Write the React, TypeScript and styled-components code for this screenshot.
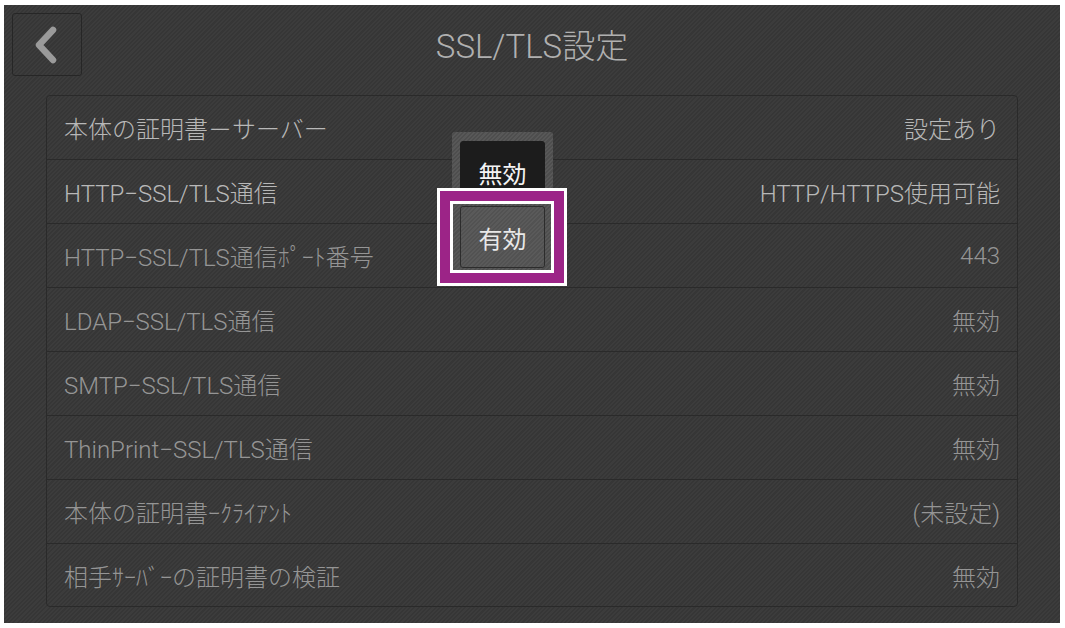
import React from "react";
import styled, { createGlobalStyle } from "styled-components";

const GlobalStyle = createGlobalStyle`
  html, body {
    margin: 0;
    padding: 0;
    background: #fff;
  }
  body {
    font-family: Roboto, "Noto Sans CJK JP", sans-serif;
  }
`;

const stripes = (a: string, b: string) =>
  `repeating-linear-gradient(135deg, ${a} 0px, ${a} 1.5px, ${b} 1.5px, ${b} 3px)`;

type Setting = { label: string; value: string; dim?: boolean };

const settings: Setting[] = [
  { label: "本体の証明書－サーバー", value: "設定あり" },
  { label: "HTTP−SSL/TLS通信", value: "HTTP/HTTPS使用可能" },
  { label: "HTTP−SSL/TLS通信ﾎﾟｰﾄ番号", value: "443", dim: true },
  { label: "LDAP−SSL/TLS通信", value: "無効", dim: true },
  { label: "SMTP−SSL/TLS通信", value: "無効", dim: true },
  { label: "ThinPrint−SSL/TLS通信", value: "無効", dim: true },
  { label: "本体の証明書ｰｸﾗｲｱﾝﾄ", value: "(未設定)", dim: true },
  { label: "相手ｻｰﾊﾞｰの証明書の検証", value: "無効", dim: true },
];

const App = (): JSX.Element => {
  return (
    <Page>
      <GlobalStyle />
      <Screen>
        <Header>
          <BackButton aria-label="戻る">
            <svg width="26" height="40" viewBox="0 0 26 40">
              <path
                d="M20 5 L6 20 L20 35"
                fill="none"
                stroke="#9a9a9a"
                strokeWidth="6.5"
                strokeLinecap="round"
                strokeLinejoin="round"
              />
            </svg>
          </BackButton>
          <Title>SSL/TLS設定</Title>
          <span />
        </Header>
        <List>
          {settings.map((s) => (
            <Row key={s.label} $dim={s.dim}>
              <span>{s.label}</span>
              <span>{s.value}</span>
            </Row>
          ))}
        </List>
        <Popup>
          <Option>無効</Option>
          <Option $selected>有効</Option>
        </Popup>
      </Screen>
    </Page>
  );
};

export default App;

const Page = styled.div`
  padding: 5px 5px 5px 4px;
  width: 1065px;
  height: 628px;
  box-sizing: border-box;
`;

const Screen = styled.div`
  position: relative;
  width: 1056px;
  height: 618px;
  background: ${stripes("#3c3c3c", "#363636")};
  overflow: hidden;
`;

const Header = styled.header`
  display: grid;
  grid-template-columns: 70px 1fr 70px;
  align-items: center;
  padding: 8px 8px 19px;
`;

const BackButton = styled.button`
  width: 70px;
  height: 63px;
  box-sizing: border-box;
  border: 1px solid #262626;
  border-radius: 3px;
  background: transparent;
  display: flex;
  align-items: center;
  justify-content: center;
  padding: 0 2px 0 0;
`;

const Title = styled.h1`
  margin: 0 0 2px;
  text-align: center;
  font-size: 33px;
  font-weight: 300;
  color: #b0b0b0;
`;

const List = styled.div`
  margin: 0 42px;
  border: 1px solid #2a2a2a;
  border-radius: 4px;
  overflow: hidden;
`;

const Row = styled.div<{ $dim?: boolean }>`
  display: flex;
  justify-content: space-between;
  align-items: center;
  height: 63px;
  padding: 0 17px 0 17px;
  font-size: 24px;
  font-weight: 300;
  color: ${(p) => (p.$dim ? "#959595" : "#b8b8b8")};
  border-bottom: 1px solid #2a2a2a;
  &:last-child {
    border-bottom: none;
    height: 62px;
  }
`;

const Popup = styled.div`
  position: absolute;
  left: 448px;
  top: 127px;
  width: 101px;
  box-sizing: border-box;
  padding: 9px 8px 8px;
  display: flex;
  flex-direction: column;
  gap: 3px;
  background: ${stripes("#585858", "#4e4e4e")};
  border-radius: 3px;
`;

const Option = styled.div<{ $selected?: boolean }>`
  position: relative;
  height: 62px;
  box-sizing: border-box;
  display: flex;
  align-items: center;
  justify-content: center;
  font-size: 24px;
  border-radius: 3px;
  color: ${(p) => (p.$selected ? "#e8e8e8" : "#f4f4f4")};
  background: ${(p) => (p.$selected ? stripes("#5a5a5a", "#525252") : "#1c1c1c")};
  border: 1px solid ${(p) => (p.$selected ? "#2c2c2c" : "#1c1c1c")};

  ${(p) =>
    p.$selected &&
    `
    &::before {
      content: "";
      position: absolute;
      top: -6px;
      bottom: -6px;
      left: -11px;
      right: -10px;
      border: 3px solid #fff;
      box-shadow: 0 0 0 10px #9c2487, 0 0 0 13px #fff;
      pointer-events: none;
    }
  `}
`;
